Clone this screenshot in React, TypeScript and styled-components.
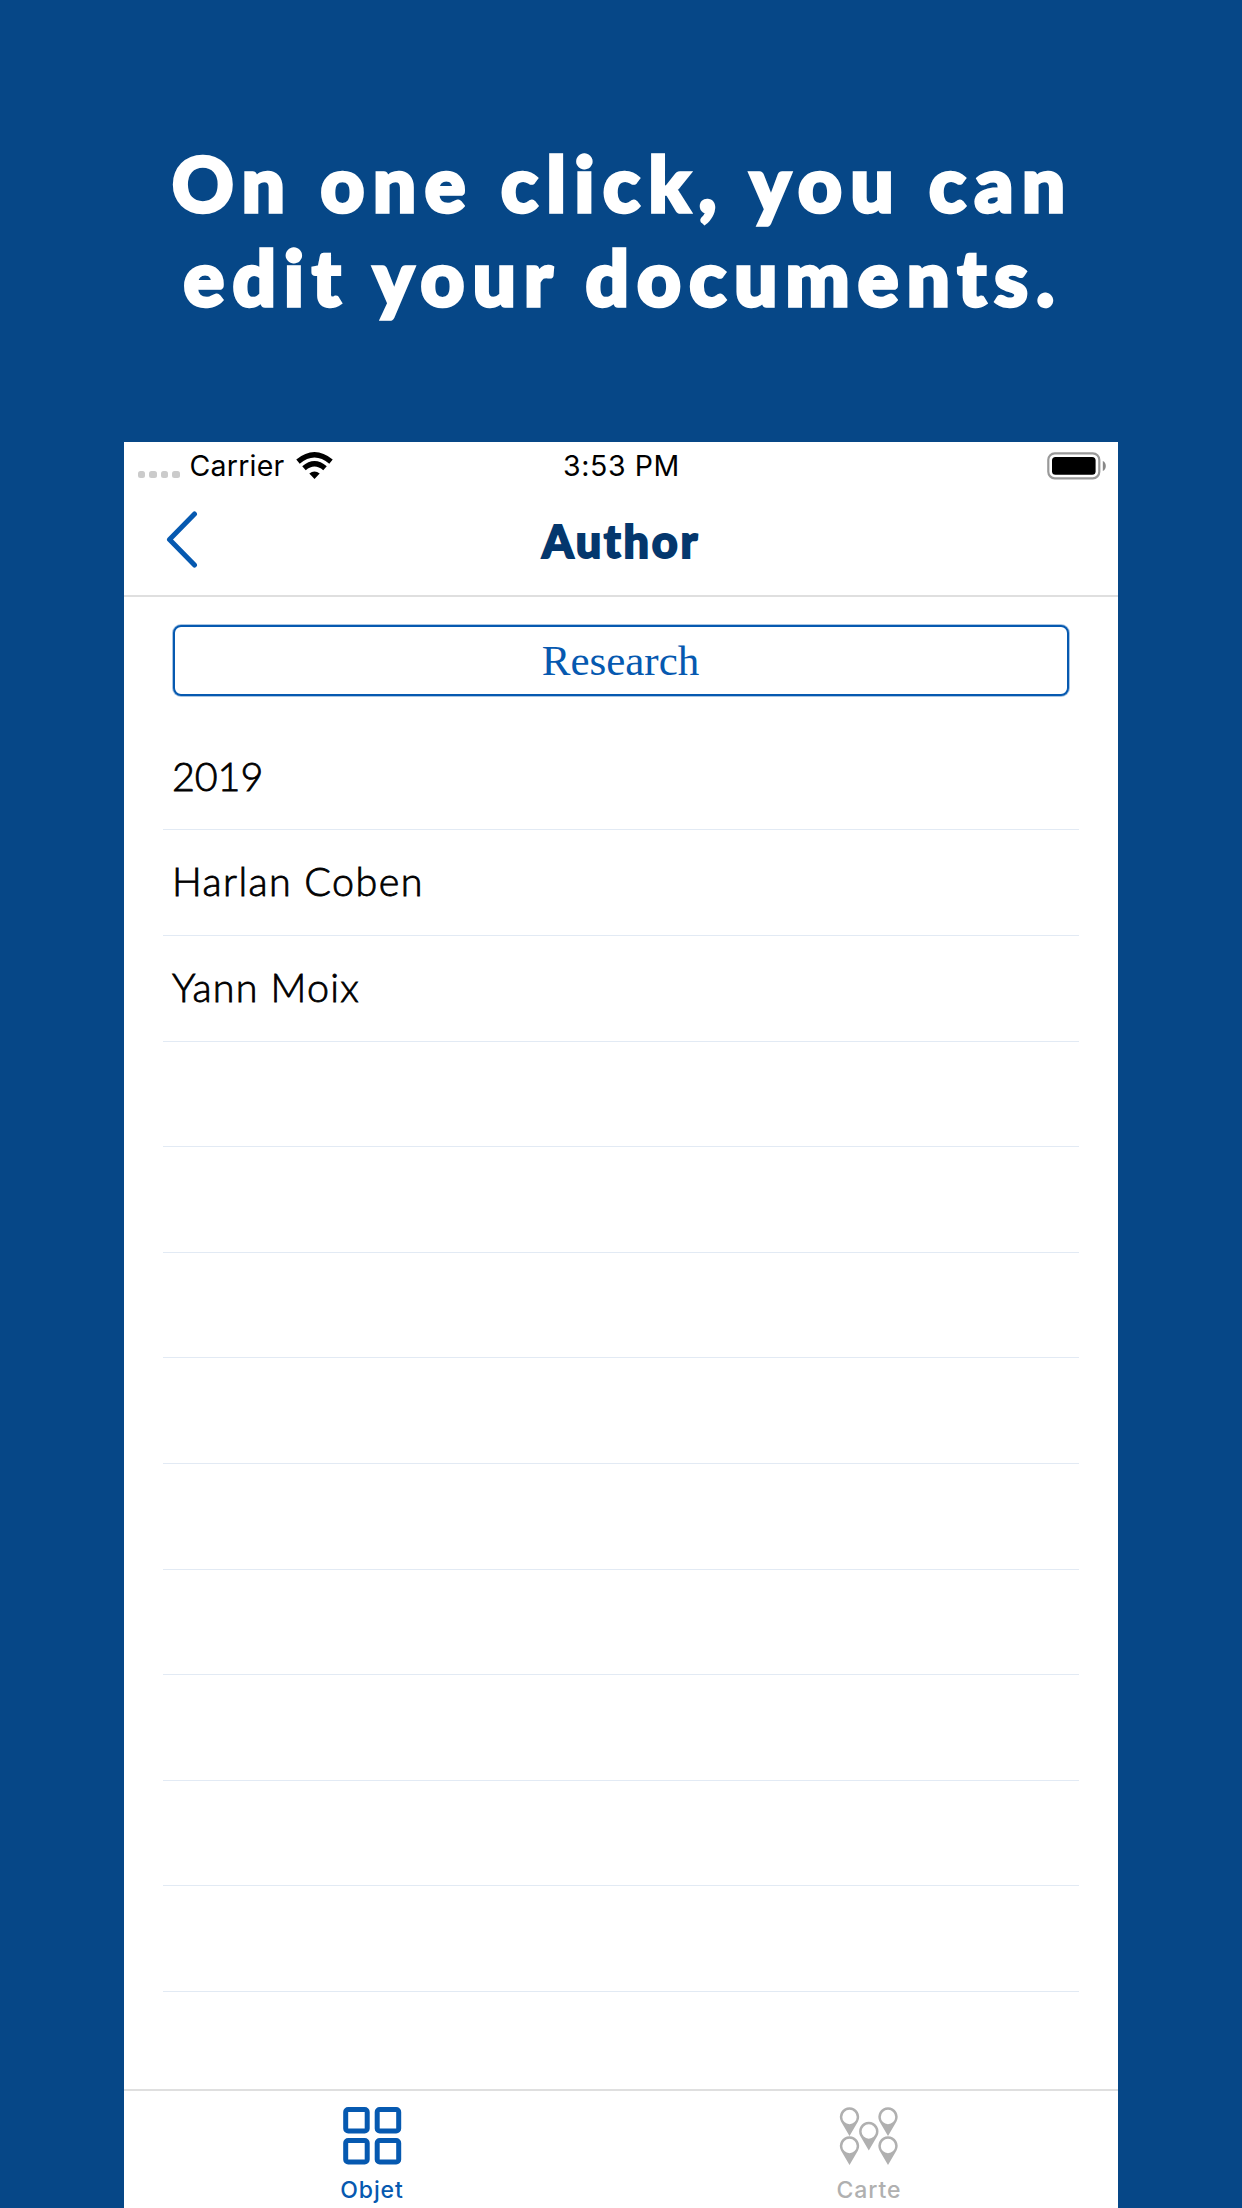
import React from 'react';
import styled, { createGlobalStyle } from 'styled-components';

const accent = '#0659b0';
const muted = '#b0b0b0';

const GlobalStyle = createGlobalStyle`
  *, *::before, *::after { box-sizing: border-box; }
  html, body { margin: 0; padding: 0; background: #064787; }
`;

const Page = styled.main`
  display: flex;
  flex-direction: column;
  align-items: center;
  width: 1242px;
  height: 2208px;
  overflow: hidden;
  background: #064787;
`;

const Headline = styled.h1`
  display: flex;
  flex-direction: column;
  align-items: center;
  width: 100%;
  height: 442px;
  margin: 0;
  padding-top: 136px;
  color: #fff;
  font: 900 76px/94px Lato, sans-serif;
  -webkit-text-stroke: 3.4px #fff;
`;

const HeadlineLine = styled.span<{ $spacing: number }>`
  display: block;
  white-space: nowrap;
  letter-spacing: ${p => p.$spacing}px;
  padding-left: 4px;
`;

const Screen = styled.section`
  display: flex;
  flex-direction: column;
  width: 994px;
  height: 1766px;
  background: #fff;
`;

const StatusBar = styled.div`
  display: grid;
  grid-template-columns: 1fr auto 1fr;
  align-items: center;
  height: 46px;
  padding: 1px 11px 0 14px;
  color: #000;
  font: 400 28.5px/46px Inter, sans-serif;
`;

const Network = styled.div`
  display: flex;
  align-items: center;
`;

const SignalDots = styled.div`
  display: flex;
  gap: 4px;
  padding-top: 17px;
  margin-right: 10px;
`;

const Dot = styled.i`
  width: 7.4px;
  height: 7px;
  border-radius: 2.5px;
  background: #cbcbcb;
`;

const Carrier = styled.span`
  letter-spacing: 0.2px;
  margin-right: 11.5px;
`;

const Clock = styled.span`
  letter-spacing: 0.6px;
  margin-right: 2px;
`;

const Battery = styled.div`
  display: flex;
  justify-self: end;
  align-items: center;
`;

const NavBar = styled.header`
  display: grid;
  grid-template-columns: 1fr auto 1fr;
  height: 109px;
  border-bottom: 2px solid #dfdfdf;
`;

const BackButton = styled.button`
  display: flex;
  justify-self: start;
  align-items: flex-start;
  border: 0;
  padding: 20px 0 0 38px;
  background: none;
`;

const Title = styled.h2`
  margin: 23px 0 0;
  color: #04376d;
  font: 900 45px/60px Lato, sans-serif;
  letter-spacing: 2.7px;
  -webkit-text-stroke: 1.8px #04376d;
`;

const Content = styled.div`
  flex: 1;
  padding: 28px 39px 0;
`;

const ResearchButton = styled.button`
  display: block;
  width: 896px;
  height: 71px;
  margin: 0 10px 28.8px;
  padding: 0 1px 0 0;
  border: 2px solid ${accent};
  border-radius: 8px;
  box-shadow: 0 0 0 1px rgba(6, 89, 176, 0.35);
  background: #fff;
  color: ${accent};
  font: 400 43px/66px 'Liberation Serif', serif;
`;

const List = styled.ul`
  width: 916px;
  margin: 0;
  padding: 0;
  list-style: none;
`;

const Row = styled.li`
  height: 105.6px;
  padding: 0 9px 3px;
  border-bottom: 1px solid #e2eaf4;
  color: #000;
  font: 300 39.5px/102px Lato, sans-serif;
  -webkit-text-stroke: 0.8px #000;
`;

const RowLabel = styled.span<{ $spacing: number }>`
  letter-spacing: ${p => p.$spacing}px;
`;

const TabBar = styled.nav`
  display: grid;
  grid-template-columns: 1fr 1fr;
  height: 119px;
  border-top: 2px solid #dfdfdf;
`;

const Tab = styled.button<{ $active?: boolean }>`
  display: flex;
  flex-direction: column;
  align-items: center;
  gap: 8px;
  padding: 16px 1px 0 0;
  border: 0;
  background: none;
  color: ${p => (p.$active ? accent : muted)};
  font: 500 23px/30px Inter, sans-serif;
  letter-spacing: 0.9px;
`;

const WifiIcon = () => (
  <svg width="37" height="28" viewBox="0 0 37 28">
    <g fill="none" stroke="#000" strokeWidth="5.4">
      <path d="M2 9.6Q18.500-4 35 9.600" />
      <path d="M8 16.200Q18.500 7.200 29 16.200" />
    </g>
    <path d="M13.300 21.600Q18.500 17.400 23.700 21.600L18.500 27Z" />
  </svg>
);

const BatteryIcon = () => (
  <svg width="60" height="28" viewBox="0 0 60 28">
    <rect x="1.300" y="1.300" width="51" height="25" rx="6.500" fill="none" stroke="#999" strokeWidth="2.200" />
    <rect x="5" y="5" width="43.600" height="17.800" rx="3.500" />
    <path d="M55.800 9c4 1.500 4 8.500 0 10z" fill="#888" />
  </svg>
);

const BackIcon = () => (
  <svg width="36" height="64" viewBox="0 0 36 64">
    <path d="M32.500 6L7.500 31.500L32.500 57" fill="none" stroke={accent} strokeWidth="5" strokeLinecap="round" strokeLinejoin="round" />
  </svg>
);

const gridCells = [[3.7, 2.5], [35.2, 2.5], [3.7, 33.5], [35.2, 33.5]];

const GridIcon = () => (
  <svg width="60" height="60" viewBox="0 0 60 60" fill="none" stroke={accent} strokeWidth="5">
    {gridCells.map(([x, y]) => (
      <rect key={`${x}-${y}`} x={x} y={y} width="21.500" height="21.500" rx="2.500" />
    ))}
  </svg>
);

const pins = [[10.5, 10], [49, 10], [29.8, 24.5], [10.5, 39], [49, 39]];

const PinsIcon = () => (
  <svg width="60" height="60" viewBox="0 0 60 60" fill={muted} fillRule="evenodd">
    {pins.map(([x, y]) => (
      <path
        key={`${x}-${y}`}
        transform={`translate(${x} ${y})`}
        d="M0 19L-8.500 4.500A9.700 9.700 0 1 1 8.500 4.500ZM0-7.200A7.200 7.200 0 1 0 0 7.200A7.200 7.200 0 1 0 0-7.200Z"
      />
    ))}
  </svg>
);

const authors = [
  { name: '2019', spacing: -0.1 },
  { name: 'Harlan Coben', spacing: 1.4 },
  { name: 'Yann Moix', spacing: 1.2 },
];
const rowCount = 12;

export default function App() {
  return (
    <>
      <GlobalStyle />
      <Page>
        <Headline>
          <HeadlineLine $spacing={8.7}>On one click, you can</HeadlineLine>
          <HeadlineLine $spacing={8.2}>edit your documents.</HeadlineLine>
        </Headline>
        <Screen>
          <StatusBar>
            <Network>
              <SignalDots>
                <Dot /><Dot /><Dot /><Dot />
              </SignalDots>
              <Carrier>Carrier</Carrier>
              <WifiIcon />
            </Network>
            <Clock>3:53 PM</Clock>
            <Battery><BatteryIcon /></Battery>
          </StatusBar>
          <NavBar>
            <BackButton aria-label="Back"><BackIcon /></BackButton>
            <Title>Author</Title>
          </NavBar>
          <Content>
            <ResearchButton>Research</ResearchButton>
            <List>
              {Array.from({ length: rowCount }, (_, i) => (
                <Row key={i}>
                  {authors[i] && <RowLabel $spacing={authors[i].spacing}>{authors[i].name}</RowLabel>}
                </Row>
              ))}
            </List>
          </Content>
          <TabBar>
            <Tab $active><GridIcon />Objet</Tab>
            <Tab><PinsIcon />Carte</Tab>
          </TabBar>
        </Screen>
      </Page>
    </>
  );
}
